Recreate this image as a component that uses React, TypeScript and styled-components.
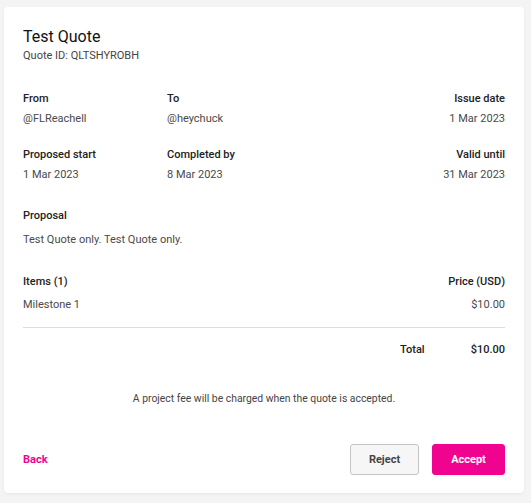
import React from 'react'
import styled, { createGlobalStyle } from 'styled-components'

const GlobalStyle = createGlobalStyle`
	html, body {
		margin: 0;
		padding: 0;
		background: #f4f4f4;
		font-family: Roboto, 'Liberation Sans', Arial, sans-serif;
		color: #222;
	}
`

const Page = styled.div`
	padding: 7px 7px 10px 4px;
`

const Card = styled.div`
	background: #fff;
	border-radius: 4px;
	box-shadow: 0 1px 3px rgba(0, 0, 0, 0.06);
	padding: 20px 19px 19px 19px;
	box-sizing: border-box;
	height: 486px;
`

const Title = styled.h1`
	margin: 0;
	font-size: 16px;
	line-height: 20px;
	font-weight: 400;
	color: #111;
`

const Sub = styled.div`
	font-size: 11px;
	line-height: 16px;
	color: #444;
	margin-top: 1px;
`

const Grid = styled.div<{ $top: number }>`
	display: grid;
	grid-template-columns: 144px 1fr 1fr;
	margin-top: ${(p) => p.$top}px;
`

const Field = styled.div<{ $right?: boolean }>`
	text-align: ${(p) => (p.$right ? 'right' : 'left')};
`

const Label = styled.div`
	font-size: 11px;
	line-height: 16px;
	font-weight: 500;
	color: #222;
`

const Value = styled.div<{ $gap?: number }>`
	font-size: 11px;
	line-height: 16px;
	color: #4a4a4a;
	margin-top: ${(p) => p.$gap ?? 4}px;
`

const Section = styled.div<{ $top: number }>`
	margin-top: ${(p) => p.$top}px;
`

const Row = styled.div`
	display: flex;
	justify-content: space-between;
`

const Divider = styled.hr`
	border: none;
	border-top: 1px solid #ddd;
	margin: 14px 0 0 0;
`

const TotalRow = styled.div`
	display: flex;
	justify-content: flex-end;
	gap: 46px;
	margin-top: 14px;
	font-size: 11px;
	line-height: 16px;
	font-weight: 500;
	color: #222;
`

const Note = styled.div`
	margin-top: 33px;
	text-align: center;
	font-size: 10.4px;
	line-height: 16px;
	color: #444;
`

const Footer = styled.div`
	margin-top: 37px;
	display: flex;
	align-items: center;
	justify-content: space-between;
`

const BackLink = styled.a`
	color: #f0048f;
	font-size: 11px;
	font-weight: 700;
	text-decoration: none;
	cursor: pointer;
`

const Buttons = styled.div`
	display: flex;
	gap: 13px;
`

const Button = styled.button<{ $primary?: boolean }>`
	height: 31px;
	width: ${(p) => (p.$primary ? 73 : 69)}px;
	border-radius: 3px;
	font-family: inherit;
	font-size: 11px;
	font-weight: 700;
	cursor: pointer;
	border: 1px solid ${(p) => (p.$primary ? '#f0048f' : '#c4c4c4')};
	background: ${(p) => (p.$primary ? '#f0048f' : '#f6f6f6')};
	color: ${(p) => (p.$primary ? '#fff' : '#444')};
`

export default function App() {
	return (
		<>
			<GlobalStyle />
			<Page>
				<Card>
					<Title>Test Quote</Title>
					<Sub>Quote ID: QLTSHYROBH</Sub>

					<Grid $top={27}>
						<Field>
							<Label>From</Label>
							<Value>@FLReachell</Value>
						</Field>
						<Field>
							<Label>To</Label>
							<Value>@heychuck</Value>
						</Field>
						<Field $right>
							<Label>Issue date</Label>
							<Value>1 Mar 2023</Value>
						</Field>
					</Grid>

					<Grid $top={20}>
						<Field>
							<Label>Proposed start</Label>
							<Value>1 Mar 2023</Value>
						</Field>
						<Field>
							<Label>Completed by</Label>
							<Value>8 Mar 2023</Value>
						</Field>
						<Field $right>
							<Label>Valid until</Label>
							<Value>31 Mar 2023</Value>
						</Field>
					</Grid>

					<Section $top={25}>
						<Label>Proposal</Label>
						<Value $gap={8}>Test Quote only. Test Quote only.</Value>
					</Section>

					<Section $top={26}>
						<Row>
							<Label>Items (1)</Label>
							<Label>Price (USD)</Label>
						</Row>
						<Row>
							<Value $gap={7}>Milestone 1</Value>
							<Value $gap={7}>$10.00</Value>
						</Row>
					</Section>

					<Divider />

					<TotalRow>
						<span>Total</span>
						<span>$10.00</span>
					</TotalRow>

					<Note>A project fee will be charged when the quote is accepted.</Note>

					<Footer>
						<BackLink>Back</BackLink>
						<Buttons>
							<Button>Reject</Button>
							<Button $primary>Accept</Button>
						</Buttons>
					</Footer>
				</Card>
			</Page>
		</>
	)
}
